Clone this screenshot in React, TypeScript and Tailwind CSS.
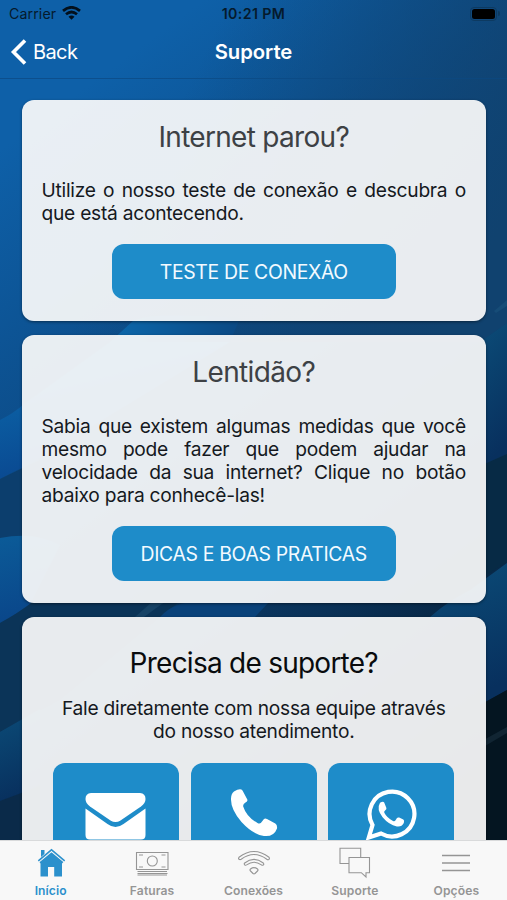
import type { ReactNode } from "react";

function Backdrop() {
  return (
    <svg className="absolute inset-0 h-full w-full" viewBox="0 0 507 900" preserveAspectRatio="none">
      <defs>
        <linearGradient id="base" gradientUnits="userSpaceOnUse" x1="0" y1="150" x2="480" y2="800">
          <stop offset="0" stopColor="#0e60a8" />
          <stop offset="0.35" stopColor="#0c4a85" />
          <stop offset="0.7" stopColor="#0a3157" />
          <stop offset="1" stopColor="#031422" />
        </linearGradient>
        <linearGradient id="corner" gradientUnits="userSpaceOnUse" x1="230" y1="0" x2="540" y2="150">
          <stop offset="0" stopColor="#10426f" stopOpacity="0" />
          <stop offset="1" stopColor="#10426f" />
        </linearGradient>
        <linearGradient id="wave" gradientUnits="userSpaceOnUse" x1="0" y1="400" x2="20" y2="475">
          <stop offset="0" stopColor="#0b60a4" />
          <stop offset="1" stopColor="#0a4a92" />
        </linearGradient>
        <linearGradient id="crest" gradientUnits="userSpaceOnUse" x1="118" y1="330" x2="235" y2="322">
          <stop offset="0" stopColor="#0b65a8" />
          <stop offset="1" stopColor="#0b4a85" />
        </linearGradient>
        <linearGradient id="swell" x1="0" y1="0" x2="0.2" y2="1">
          <stop offset="0" stopColor="#0b5b98" />
          <stop offset="1" stopColor="#0a468a" />
        </linearGradient>
        <linearGradient id="deep" x1="0" y1="0" x2="0.2" y2="1">
          <stop offset="0" stopColor="#0b4c78" />
          <stop offset="1" stopColor="#08305e" />
        </linearGradient>
      </defs>
      <rect width="507" height="900" fill="url(#base)" />
      <path d="M0 0H507V323L480 342H0Z" fill="url(#corner)" />
      <path d="M0 420 Q14 413 24 404 L110 342 L230 342 L30 464 Q12 472 0 479Z" fill="url(#wave)" />
      <path d="M110 342 L133 321 Q150 312 240 318 L230 342Z" fill="url(#crest)" />
      <path d="M0 479 Q14 472 40 460 L40 540 L0 538Z" fill="#0c3e6d" />
      <path d="M0 538 Q35 531 60 545 L30 604 Q15 615 0 623Z" fill="url(#swell)" />
      <path d="M0 623 Q17 614 34 601 L180 601 L60 700 L0 732Z" fill="#0b3458" />
      <path d="M135 617 L153 601 L166 601 L144 617Z" fill="#174366" />
      <path d="M160 617 Q173 602 200 601 L270 601 L255 617Z" fill="#0a427a" />
      <path d="M0 732 L40 709 L40 790 L0 801Z" fill="url(#deep)" />
      <path d="M0 801 L40 786 L40 840 L0 840Z" fill="#0a2a49" />
      <path d="M480 342 L507 323 L507 454 L480 466Z" fill="url(#deep)" />
      <path d="M480 466 L507 454 L507 562 L480 579Z" fill="#072a45" />
      <path d="M430 617 Q448 601 470 590 L507 563 L507 690 L480 705 L480 617Z" fill="url(#deep)" />
      <path d="M480 705 L507 690 L507 840 L480 840Z" fill="#041521" />
      <path d="M480 742 L507 727 L507 733 L480 749Z" fill="#112533" />
      <path d="M494 311 L507 300 L507 306 L496 313Z" fill="#1b5580" opacity="0.5" />
    </svg>
  );
}

function Card({ className, children }: { className: string; children: ReactNode }) {
  return (
    <section
      className={`flex w-full shrink-0 flex-col items-center rounded-[12px] bg-[#fafafa]/93 pr-[20px] pl-[19.5px] shadow-[0_1px_3px_rgba(0,0,0,0.45)] ${className}`}
    >
      {children}
    </section>
  );
}

function Action({ children }: { children: ReactNode }) {
  return (
    <button className="flex h-[55px] w-[284px] shrink-0 items-center justify-center rounded-[12px] bg-[#1e8cc9] pt-[2px] text-[19.4px] tracking-[-0.33px] whitespace-nowrap text-[#f3faff]">
      {children}
    </button>
  );
}

function Contact({ children }: { children: ReactNode }) {
  return (
    <button className="h-[126px] w-[126px] rounded-[12px] bg-[#1e8cc9] text-white">
      <svg className="h-[126px] w-[126px]" viewBox="0 0 126 126" fill="currentColor">
        {children}
      </svg>
    </button>
  );
}

function Tab({ label, active, children }: { label: string; active?: boolean; children: ReactNode }) {
  return (
    <button className={`flex flex-1 flex-col items-center ${active ? "text-[#2b90cc]" : "text-[#959595]"}`}>
      <svg className="mt-[3px] h-[38px] w-[40px]" viewBox="0 0 40 38" fill="none" stroke="currentColor" strokeWidth="1.1">
        {children}
      </svg>
      <span className="mt-[1px] text-[12.1px] leading-[15px] font-semibold tracking-[0.1px]">{label}</span>
    </button>
  );
}

export default function App() {
  return (
    <main className="relative flex h-[900px] w-[507px] flex-col overflow-hidden bg-[#0c4a85] font-['Inter','Liberation_Sans',sans-serif]">
      <Backdrop />
      <div className="relative grid h-[27px] shrink-0 grid-cols-3 items-center px-[9px] text-[14.2px] text-[#051a2c]">
        <div className="flex items-center gap-[6px]">
          <span className="tracking-[0.1px]">Carrier</span>
          <svg className="h-[14px] w-[19px]" viewBox="0 0 19 14" fill="none" stroke="#03101c" strokeWidth="2.7">
            <path d="M1 4.9Q9.5-2.3 18 4.9M4 8.3Q9.5 3.7 15 8.3" />
            <path d="M6.5 10.7Q9.5 8.5 12.5 10.7L9.5 13.8Z" fill="#03101c" stroke="none" />
          </svg>
        </div>
        <span className="text-center text-[14.2px] font-semibold tracking-[0.4px]">10:21 PM</span>
        <div className="flex items-center justify-end gap-[1px]">
          <span className="flex h-[14px] w-[27px] items-center justify-center rounded-[4px] border border-[#0d3a61]">
            <span className="h-[10px] w-[23px] rounded-[2.5px] bg-black" />
          </span>
          <span className="-mr-[2px] h-[5px] w-[2px] rounded-r-full bg-[#0d3a61]" />
        </div>
      </div>
      <header className="relative grid h-[52px] shrink-0 grid-cols-3 items-center border-b border-[#0c4982]/70 px-[10px] text-[20px] text-white">
        <div className="flex items-center gap-[6px]">
          <svg className="-mt-[2px] h-[26px] w-[17px]" viewBox="0 0 17 26" fill="none" stroke="currentColor" strokeWidth="3.6">
            <path d="M15 1.5 3.5 13 15 24.5" />
          </svg>
          <span className="-mt-[1px] tracking-[-0.6px]">Back</span>
        </div>
        <h1 className="text-center text-[20.3px] font-semibold tracking-[-0.05px]">Suporte</h1>
      </header>
      <div className="relative flex min-h-0 flex-1 flex-col gap-[14.7px] overflow-hidden pt-[21px] pr-[21px] pl-[22px] text-[19.2px] leading-[23px] tracking-[-0.26px] text-[#15191e]">
        <Card className="h-[220.6px]">
          <h2 className="mt-[19.6px] text-[28px] leading-[34px] tracking-[-0.7px] text-[#3d4145]">Internet parou?</h2>
          <p className="mt-[25px] mb-[19.2px] w-full text-justify">
            Utilize o nosso teste de conexão e descubra o que está acontecendo.
          </p>
          <Action>TESTE DE CONEXÃO</Action>
        </Card>
        <Card className="h-[267.3px]">
          <h2 className="mt-[19.8px] text-[28px] leading-[34px] tracking-[-0.65px] text-[#3d4145]">Lentidão?</h2>
          <p className="mt-[25.6px] mb-[19px] w-full text-justify">
            Sabia que existem algumas medidas que você mesmo pode fazer que podem ajudar na velocidade da sua internet?
            Clique no botão abaixo para conhecê-las!
          </p>
          <Action>DICAS E BOAS PRATICAS</Action>
        </Card>
        <Card className="h-[320px]">
          <h2 className="mt-[28.6px] text-[28px] leading-[34px] tracking-[-0.75px] text-[#090b0d]">Precisa de suporte?</h2>
          <p className="mt-[17.4px] mb-[19.7px] text-center">
            Fale diretamente com nossa equipe através
            <br />
            do nosso atendimento.
          </p>
          <div className="flex gap-[11.7px]">
            <Contact>
              <path d="M38 30H87Q92.5 30.5 92.5 36Q92.5 40 88 43.5L67.5 57.5Q62.5 60.5 57.5 57.5L37 43.5Q32.5 40 32.5 36Q32.5 30.5 38 30Z" />
              <path d="M32.5 45.5L54.5 61Q62.5 67 70.5 61L92.5 45.5V72Q92.5 76.5 88 76.5H37Q32.5 76.5 32.5 72Z" />
            </Contact>
            <Contact>
              <path d="M43 28.5Q49.5 24.5 51.5 27.5L56.3 36.5Q57 38.5 54.5 39.5Q51.8 41 52.2 43.5Q55.5 54 66.5 60Q69.5 61.5 71 58.5L73 56Q74.2 55 76 56L84.3 60.5Q86.5 62 86 65.5Q83 74 73 73Q62 71.5 50.5 59Q39.5 46 40 35.5Q40.2 30.5 43 28.5Z" />
            </Contact>
            <Contact>
              <path
                d="M40.8 74.5L44.5 62A22.4 22.4 0 1 1 53 70.5Z"
                fill="none"
                stroke="currentColor"
                strokeWidth="4.2"
              />
              <path d="M52 39.7Q55.3 37.8 56.2 39.5L58.4 45Q58.7 46.2 57.3 47.2Q55.7 48.5 56.3 49.8Q59 55 65 58Q66.8 58.7 67.7 57L69 55Q69.8 54 71.2 54.6L75.3 56.6Q76.7 57.5 75.8 60Q73.7 64.2 68.8 63.4Q61 62 54.6 54.3Q48.2 46 52 39.7Z" />
            </Contact>
          </div>
        </Card>
      </div>
      <nav className="relative flex h-[60px] shrink-0 border-t border-[#d9dadb] bg-[#f8f8f8]">
        <Tab label="Início" active>
          <path
            d="M8 17.5 20.5 6.5 33 17.5 31 19.5V32.5H23.2V23H17V32.5H9.5V19.5ZM10 6H13.5V10L10 13Z"
            fill="currentColor"
            stroke="none"
          />
          <path d="M7.5 18.3 20.5 7.5 33.5 18.3" stroke="#f8f8f8" strokeWidth="1.1" />
          <path d="M7.3 16.9 20.5 5.7 33.7 16.9" strokeWidth="1.5" />
        </Tab>
        <Tab label="Faturas">
          <path d="M4.5 8.5H36V25.5H4.5ZM5.5 27.5H35M5.5 29.5H35.5M5.5 31H35" />
          <circle cx="20.3" cy="17" r="5" />
          <path d="M7 11H11M29.5 11H33.5M7 23H11M29.5 23H33.5" />
        </Tab>
        <Tab label="Conexões">
          <path d="M5 13.3Q20 1.7 35 13.3Q36 14.7 34.8 15.5Q33.8 16 32.8 15.3Q20 5.8 7.2 15.3Q6 16 5 15.3Q4 14.2 5 13.3Z" />
          <path d="M10.7 19Q20 11.8 29.3 19Q30.3 20.2 29.2 21Q28.3 21.6 27.4 20.9Q20 15.5 12.6 20.9Q11.5 21.6 10.7 20.8Q9.8 19.8 10.7 19Z" />
          <path d="M16.5 25Q20 22.3 23.5 25Q24.5 26 23.5 27L21 29.5Q20 30.2 19 29.5L16.5 27Q15.5 26 16.5 25Z" />
        </Tab>
        <Tab label="Suporte">
          <path d="M14 19.5H5V4.3H25.7V13.3" />
          <path d="M14 13.5H34.5V28.7H31V33L26.3 28.7H14Z" />
        </Tab>
        <Tab label="Opções">
          <path d="M6 11.5H34M6 19H34M6 26.5H34" strokeWidth="1.3" />
        </Tab>
      </nav>
    </main>
  );
}
